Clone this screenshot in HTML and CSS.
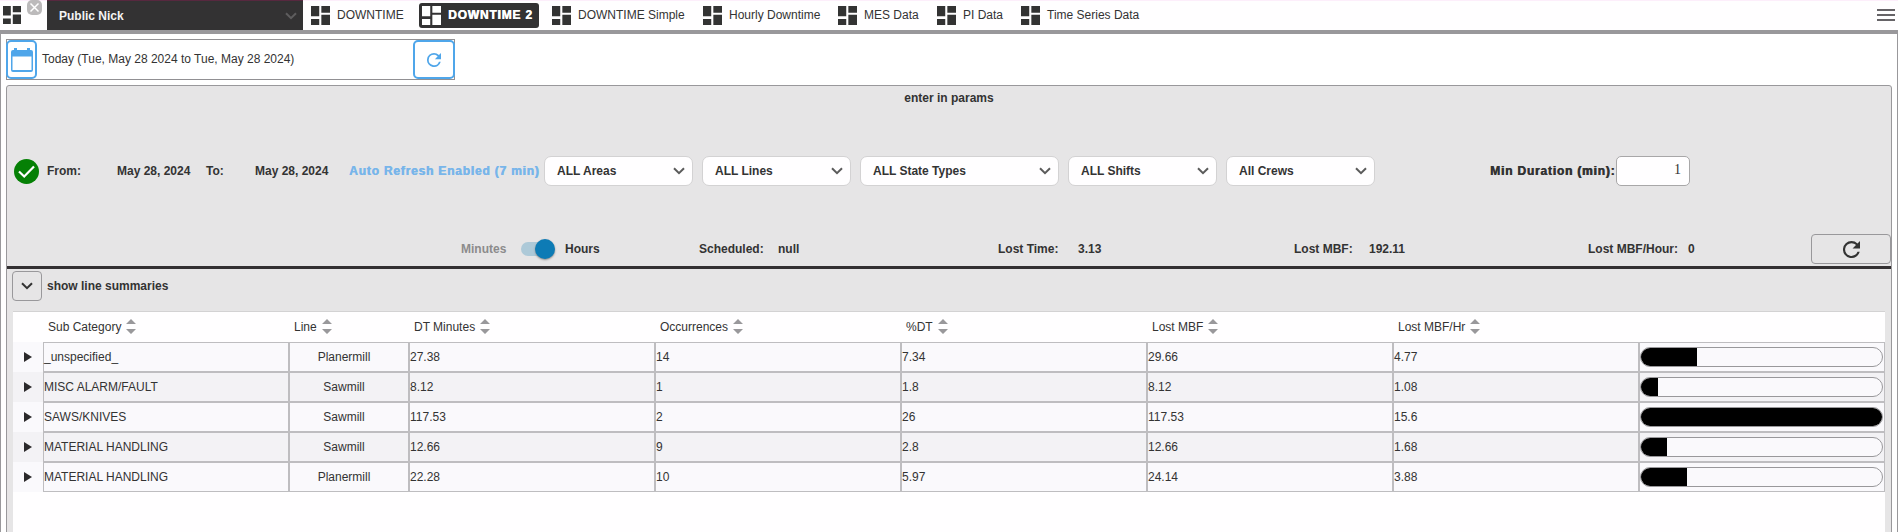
FILE: index.html
```html
<!DOCTYPE html>
<html lang="en">
<head>
<meta charset="utf-8">
<title>Downtime 2</title>
<link rel="stylesheet" href="styles.css">
</head>
<body>
<svg class="defs" aria-hidden="true">
  <symbol id="dash" viewBox="3 3 18 18"><path d="M3 12.6h7.8V3H3zm0 8.4h7.8v-5.6H3zm9.8 0H21V11.4h-8.200zm0-18v6.300H21V3z"/></symbol>
  <symbol id="chev" viewBox="0 0 12 8"><path d="M1 1.200l5 5 5-5" fill="none" stroke="currentColor" stroke-width="2"/></symbol>
  <symbol id="reload" viewBox="4 4 16 16"><path d="M17.650 6.350A7.960 7.960 0 0 0 12 4a8 8 0 1 0 7.730 10h-2.080A6 6 0 1 1 12 6c1.660 0 3.140.69 4.220 1.780L13 11h7V4z"/></symbol>
  <symbol id="sort" viewBox="0 0 10 15"><path d="M5 0l5 5H0zM5 15l5-5H0z"/></symbol>
</svg>
<header class="topbar">
  <svg class="home-icon"><use href="#dash"/></svg>
  <svg class="close" viewBox="0 0 15 15"><rect width="15" height="15" rx="5"/><path d="M3.500 3.500l8 8M11.500 3.500l-8 8"/></svg>
  <div class="user-select"><span>Public Nick</span><svg class="chev"><use href="#chev"/></svg></div>
  <nav class="tabs">
    <a class="tab w1"><svg><use href="#dash"/></svg>DOWNTIME</a>
    <a class="tab active"><svg><use href="#dash"/></svg><span class="heavy">DOWNTIME 2</span></a>
    <a class="tab w2"><svg><use href="#dash"/></svg>DOWNTIME Simple</a>
    <a class="tab w3"><svg><use href="#dash"/></svg>Hourly Downtime</a>
    <a class="tab w4"><svg><use href="#dash"/></svg>MES Data</a>
    <a class="tab w5"><svg><use href="#dash"/></svg>PI Data</a>
    <a class="tab w6"><svg><use href="#dash"/></svg>Time Series Data</a>
  </nav>
  <div class="burger"><i></i><i></i><i></i></div>
</header>
<main class="content">
  <div class="datebar">
    <button class="cal"><svg viewBox="0 0 22 24"><path d="M3 0h3v2h10V0h3v2h1a2 2 0 0 1 2 2v18a2 2 0 0 1-2 2H2a2 2 0 0 1-2-2V4a2 2 0 0 1 2-2h1zM1.500 8.500v13.500h19V8.500z" fill-rule="evenodd"/></svg></button>
    <span class="range">Today (Tue, May 28 2024 to Tue, May 28 2024)</span>
    <button class="reload-blue"><svg><use href="#reload"/></svg></button>
  </div>
  <section class="panel">
    <div class="title">enter in params</div>
    <div class="filters">
      <svg class="ok" viewBox="0 0 25 25"><circle cx="12.500" cy="12.500" r="12.500"/><path d="M5 12.500l5.200 5L20 7.500"/></svg>
      <b class="f-from">From:</b><b class="f-d1">May 28, 2024</b><b class="f-to">To:</b><b class="f-d2">May 28, 2024</b>
      <b class="auto heavy">Auto Refresh Enabled (7 min)</b>
      <div class="selects">
        <div class="select">ALL Areas<svg class="chev"><use href="#chev"/></svg></div>
        <div class="select">ALL Lines<svg class="chev"><use href="#chev"/></svg></div>
        <div class="select wide">ALL State Types<svg class="chev"><use href="#chev"/></svg></div>
        <div class="select">ALL Shifts<svg class="chev"><use href="#chev"/></svg></div>
        <div class="select">All Crews<svg class="chev"><use href="#chev"/></svg></div>
      </div>
      <b class="min-label heavy">Min Duration (min):</b>
      <div class="num">1</div>
    </div>
    <div class="stats">
      <b class="s-min">Minutes</b>
      <div class="toggle"><i></i></div>
      <b class="s-hours">Hours</b>
      <b class="s-a">Scheduled:</b><b class="s-b">null</b>
      <b class="s-c">Lost Time:</b><b class="s-d">3.13</b>
      <b class="s-e">Lost MBF:</b><b class="s-f">192.11</b>
      <b class="s-g">Lost MBF/Hour:</b><b class="s-h">0</b>
      <button class="reload-dark"><svg><use href="#reload"/></svg></button>
    </div>
    <div class="summary"><button class="expand"><svg class="chev"><use href="#chev"/></svg></button><b>show line summaries</b></div>
    <div class="grid">
      <div class="row head">
        <span></span>
        <span>Sub Category<svg><use href="#sort"/></svg></span>
        <span>Line<svg><use href="#sort"/></svg></span>
        <span>DT Minutes<svg><use href="#sort"/></svg></span>
        <span>Occurrences<svg><use href="#sort"/></svg></span>
        <span>%DT<svg><use href="#sort"/></svg></span>
        <span>Lost MBF<svg><use href="#sort"/></svg></span>
        <span>Lost MBF/Hr<svg><use href="#sort"/></svg></span>
        <span></span>
      </div>
      <div class="row"><i class="tri"></i><span>_unspecified_</span><span class="mid">Planermill</span><span>27.38</span><span>14</span><span>7.34</span><span>29.66</span><span>4.77</span><span><div class="bar"><div style="width:23.4%"></div></div></span></div>
      <div class="row"><i class="tri"></i><span>MISC ALARM/FAULT</span><span class="mid">Sawmill</span><span>8.12</span><span>1</span><span>1.8</span><span>8.12</span><span>1.08</span><span><div class="bar"><div style="width:7%"></div></div></span></div>
      <div class="row"><i class="tri"></i><span>SAWS/KNIVES</span><span class="mid">Sawmill</span><span>117.53</span><span>2</span><span>26</span><span>117.53</span><span>15.6</span><span><div class="bar"><div style="width:100%"></div></div></span></div>
      <div class="row"><i class="tri"></i><span>MATERIAL HANDLING</span><span class="mid">Sawmill</span><span>12.66</span><span>9</span><span>2.8</span><span>12.66</span><span>1.68</span><span><div class="bar"><div style="width:10.8%"></div></div></span></div>
      <div class="row"><i class="tri"></i><span>MATERIAL HANDLING</span><span class="mid">Planermill</span><span>22.28</span><span>10</span><span>5.97</span><span>24.14</span><span>3.88</span><span><div class="bar"><div style="width:19.1%"></div></div></span></div>
    </div>
  </section>
</main>
</body>
</html>
```
FILE: styles.css
```css
* { box-sizing: border-box; }
html, body { margin: 0; height: 100%; }
body {
  display: flex; flex-direction: column; height: 532px; overflow: hidden;
  background: #fff; color: #333; font: 12px/14px "Liberation Sans", Arial, sans-serif;
}
svg { display: block; flex: none; fill: currentColor; }
button { display: flex; align-items: center; justify-content: center; padding: 0; flex: none; background: transparent; color: inherit; }
b { white-space: nowrap; flex: none; }
.defs { position: absolute; width: 0; height: 0; }
.chev { width: 12px; height: 8px; }
.heavy { font-weight: bold; letter-spacing: .8px; text-shadow: .6px 0 currentColor; }

.topbar {
  display: flex; align-items: flex-start; flex: none; height: 34px; padding-left: 3px;
  border-bottom: 4px solid #99989b; box-shadow: inset 0 1px #fdeefb; background: #fffeff;
}
.home-icon { width: 18px; height: 18px; margin: 6px 6px 0 0; }
.close { width: 15px; height: 15px; margin-right: 5px; fill: #bcbabb; }
.close path { stroke: #fff; stroke-width: 1.5; }
.user-select {
  display: flex; align-items: center; justify-content: space-between; width: 256px; height: 30px;
  padding: 0 6px 0 12px; background: #333233; border-top: 1px solid #57283f; color: #f3f3f3; font-weight: bold;
}
.user-select .chev { color: #5e5d5e; }
.tabs { display: flex; align-items: center; height: 30px; padding: 1px 0 0 8px; }
.tab { display: flex; align-items: center; gap: 7px; flex: none; height: 25px; white-space: nowrap; line-height: 12px; padding-bottom: 1px; }
.tab svg { width: 19px; height: 19px; margin-top: 1px; }
.active { width: 120px; margin-right: 13px; padding-left: 3px; background: #333233; color: #fff; border-radius: 3px; }
.w1 { width: 108px; }
.w2 { width: 151px; }
.w3 { width: 135px; }
.w4 { width: 99px; }
.w5 { width: 84px; }
.burger { display: grid; gap: 3px; width: 18px; margin: 9px 3px 0 auto; }
.burger i { height: 2px; background: #666367; }

.content { flex: 1; min-height: 0; padding: 5px 5px 0; border: 1px solid #99989b; border-width: 0 1px; }
.datebar { display: flex; align-items: center; width: 449px; height: 41px; border: 1px solid #919093; }
.cal, .reload-blue { height: 39px; border: 2px solid #4fa6ea; border-radius: 5px; color: #4fa6ea; }
.cal { width: 31px; margin-left: -1px; }
.cal svg { width: 22px; height: 24px; }
.range { flex: 1; padding: 0 0 1px 5px; }
.reload-blue { width: 42px; margin-right: -1px; }
.reload-blue svg { width: 14px; height: 14px; }

.panel { height: 460px; margin-top: 5px; background: #e6e5e6; border: 1px solid #99989b; border-radius: 3px; }
.title { height: 70px; padding-top: 5px; text-align: center; font-weight: bold; }
.filters { display: flex; align-items: center; height: 30px; padding-left: 7px; }
.ok { width: 25px; height: 25px; margin-right: 8px; fill: #058005; }
.ok path { fill: none; stroke: #fff; stroke-width: 2.2; }
.f-from { width: 70px; }
.f-d1 { width: 89px; }
.f-to { width: 49px; }
.f-d2 { width: 94px; }
.auto { width: 195px; color: #78b5ea; }
.selects { display: flex; gap: 9px; width: 831px; flex: none; }
.select {
  display: flex; align-items: center; justify-content: space-between; width: 149px; height: 30px;
  padding: 0 7px 0 12px; background: #fffeff; border: 1px solid #d3d2d3; border-radius: 7px; font-weight: bold;
}
.select .chev { color: #5b5b5b; }
.select.wide { width: 199px; }
.min-label { margin-left: 115px; width: 126px; }
.num { width: 74px; height: 30px; padding: 6px 8px 0 0; text-align: right; background: #fffeff; border: 1px solid #a8a7a8; border-radius: 5px; font: 14px/14px "Liberation Serif", serif; }
.stats { display: flex; align-items: center; height: 83px; padding: 46px 0 0 454px; border-bottom: 3px solid #333032; }
.s-min { width: 60px; color: #8c8b8c; }
.toggle { width: 28px; height: 14px; margin-right: 16px; padding-left: 14px; flex: none; background: #adc9d8; border-radius: 7px; }
.toggle i { display: block; width: 20px; height: 20px; margin-top: -3px; border-radius: 50%; background: #0d7bb5; box-shadow: 0 1px 2px #8a8a8a; }
.s-hours { width: 134px; }
.s-a { width: 79px; }
.s-b { width: 220px; }
.s-c { width: 80px; }
.s-d { width: 216px; }
.s-e { width: 75px; }
.s-f { width: 219px; }
.s-g { width: 100px; }
.s-h { width: 123px; }
.reload-dark { width: 80px; height: 30px; border: 1px solid #99989b; border-radius: 4px; }
.reload-dark svg { width: 17px; height: 17px; }
.summary { display: flex; align-items: center; gap: 5px; height: 34px; padding: 0 0 0 5px; }
.summary b { padding-bottom: 1px; }
.expand { width: 30px; height: 30px; border: 1px solid #99989b; border-radius: 4px; }

.grid { height: 240px; margin: 8px 6px 0; border-top: 1px solid #d3d2d3; background: #fffeff; }
.row { display: grid; grid-template-columns: 30px 246px 120px repeat(6, 246px); height: 30px; background: #faf9fc; }
.row:nth-child(odd) { background: #f3f2f5; }
.row > span { display: flex; align-items: center; border: 1px solid #bebdc0; white-space: nowrap; }
.row > .mid { justify-content: center; padding-right: 10px; }
.row.head { background: #fffeff; }
.head > span { border: 0; gap: 5px; padding: 0 0 1px 5px; }
.head svg { width: 10px; height: 15px; fill: #99989b; }
.tri { width: 8px; height: 10px; margin: 10px 0 0 11px; background: #2b292b; clip-path: polygon(0 0, 100% 50%, 0 100%); }
.bar { width: 243px; height: 20px; overflow: hidden; background: #faf9fc; border: 1px solid #99989b; border-radius: 10px; }
.bar div { height: 100%; background: #000; }
```
